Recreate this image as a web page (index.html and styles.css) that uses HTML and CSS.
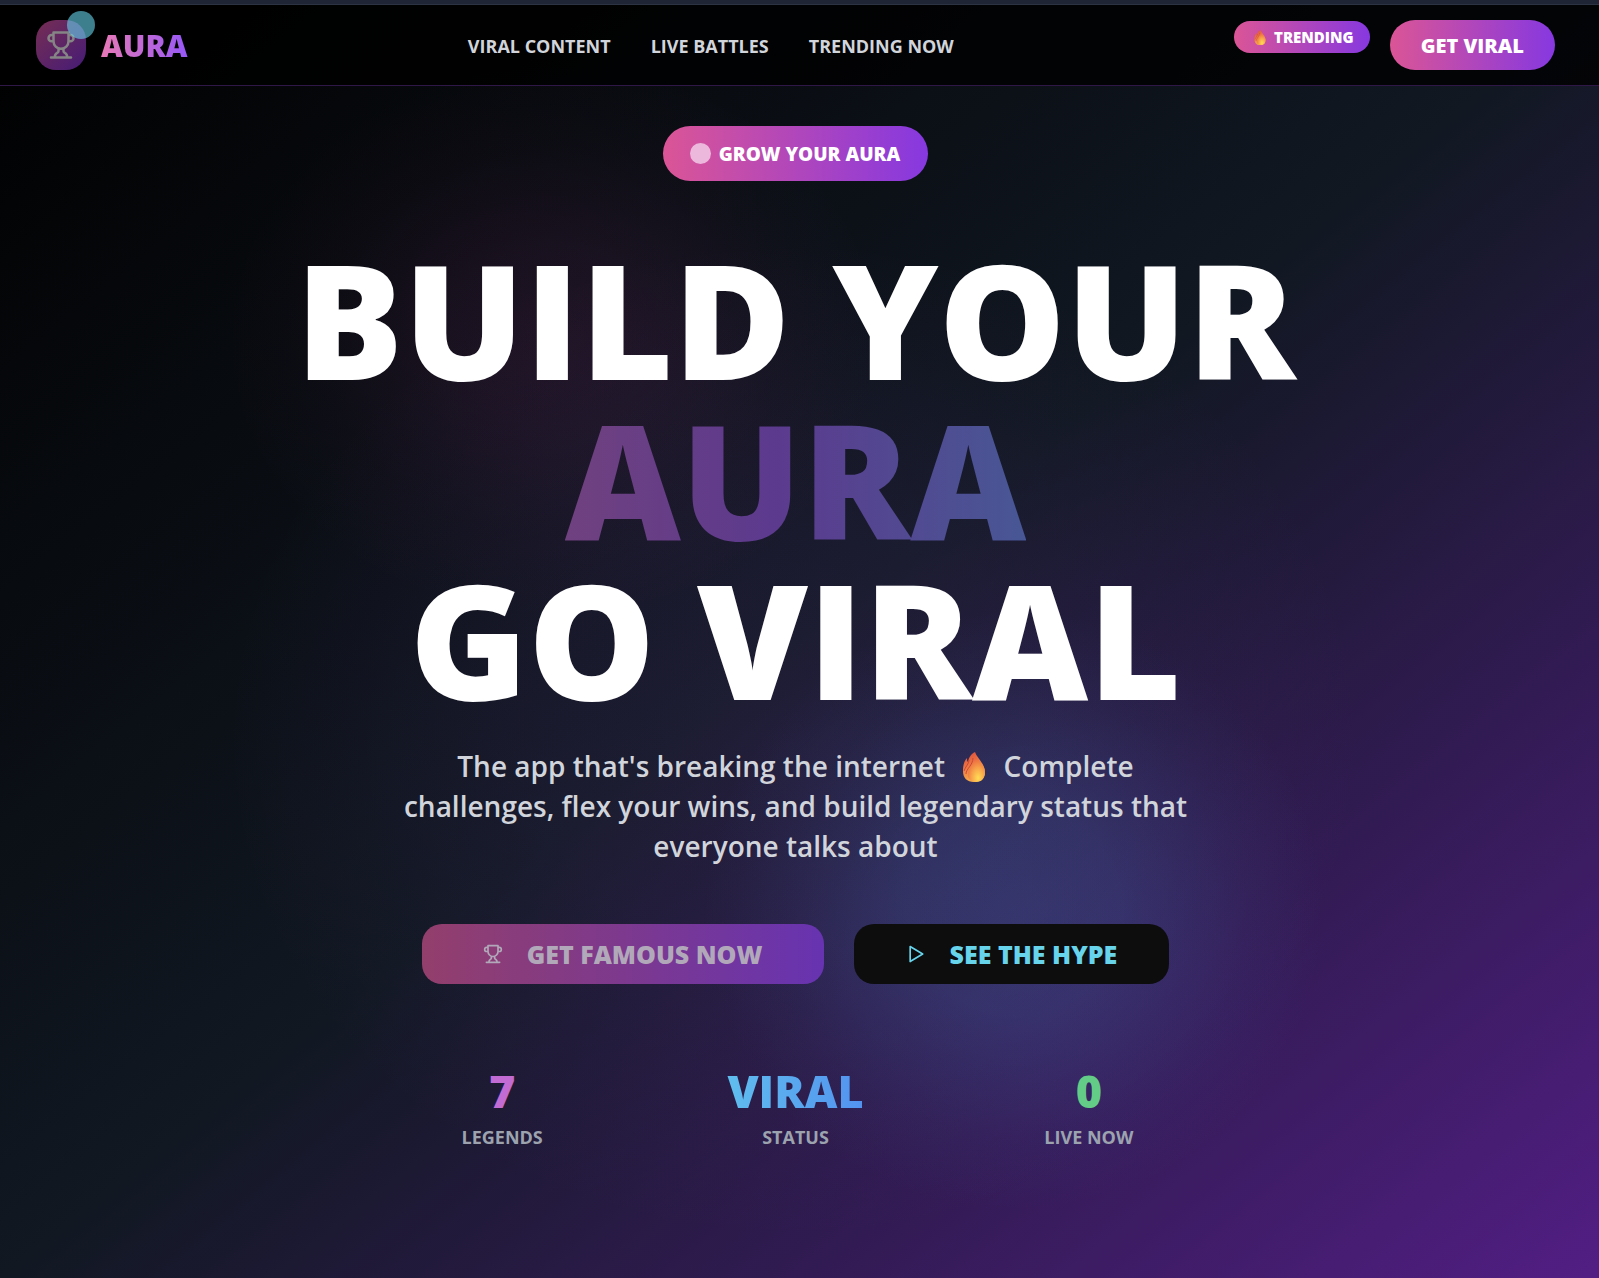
FILE: index.html
```html
<!DOCTYPE html>
<html lang="en">
<head>
<meta charset="utf-8">
<meta name="viewport" content="width=device-width, initial-scale=1">
<title>AURA</title>
<link rel="stylesheet" href="styles.css">
</head>
<body>
<svg class="defs" aria-hidden="true">
  <defs>
    <linearGradient id="flame" x1="0" y1="0" x2="0.4" y2="1"><stop offset="0" stop-color="#d6403a"/><stop offset="0.5" stop-color="#f07a43"/><stop offset="1" stop-color="#f6b04c"/></linearGradient>
    <radialGradient id="core" cx="0.6" cy="0.85" r="0.75"><stop offset="0" stop-color="#ffdc55"/><stop offset="0.45" stop-color="#f9a94b"/><stop offset="1" stop-color="#e9653f"/></radialGradient>
    <symbol id="fire" viewBox="0 0 24 30">
      <path d="M12 30C5 30 1 26 1 19C1 14 2 9 5 6C5 8 5 9 6 10C7 5 9 2 13 0C15 6 23 12 23 20C23 26 19 30 12 30Z" fill="url(#flame)"/>
      <path d="M14 30C8 30 5 26 6 21C7 15 14 10 13 3C15 8 23 13 23 20C23 26 20 30 14 30Z" fill="url(#core)"/>
      <path d="M2 19C3 15 7 12 7 8M4 22C4 17 11 13 11 6" fill="none" stroke="#c9473a" stroke-width="1"/>
    </symbol>
    <symbol id="trophy" viewBox="0 0 24 24">
      <path d="M6 2H18V9A6 6 0 0 1 6 9ZM6 4H4.500A2.500 2.500 0 0 0 4.500 9H6M18 4H19.500A2.500 2.500 0 0 1 19.500 9H18M10 14.700V17C10 17.600 9.500 18 9 18.200C7.900 18.800 7 20.200 7 22M14 14.700V17C14 17.600 14.500 18 15 18.200C16.100 18.800 17 20.200 17 22M4 22H20" fill="none" stroke="currentColor" stroke-width="2" stroke-linecap="round" stroke-linejoin="round"/>
    </symbol>
  </defs>
</svg>
<div class="page">
  <div class="glow glow-purple"></div>
  <div class="glow glow-pink"></div>
  <div class="glow glow-blue"></div>
  <div class="strip"></div>
  <header class="nav">
    <a class="brand" href="#">
      <span class="logo"><svg class="logo-icon"><use href="#trophy"/></svg><span class="logo-dot"></span></span>
      <span class="brand-name">AURA</span>
    </a>
    <nav class="links">
      <a href="#">VIRAL CONTENT</a>
      <a href="#">LIVE BATTLES</a>
      <a href="#">TRENDING NOW</a>
    </nav>
    <div class="actions">
      <span class="trending"><svg class="fire-small"><use href="#fire"/></svg>TRENDING</span>
      <button class="viral" type="button">GET VIRAL</button>
    </div>
  </header>
  <main class="hero">
    <div class="pill"><span class="pill-dot"></span>GROW YOUR AURA</div>
    <h1 class="title"><span>BUILD YOUR</span> <span class="title-aura">AURA</span> <span>GO VIRAL</span></h1>
    <p class="lead">The app that's breaking the internet <svg class="fire-large" role="img" aria-label="fire"><use href="#fire"/></svg> Complete<br>challenges, flex your wins, and build legendary status that<br>everyone talks about</p>
    <div class="cta">
      <button class="famous" type="button"><svg class="cta-icon"><use href="#trophy"/></svg>GET FAMOUS NOW</button>
      <button class="hype" type="button"><svg class="cta-icon" viewBox="0 0 24 24"><path d="M5 3L20 12L5 21Z" fill="none" stroke="currentColor" stroke-width="2" stroke-linejoin="round"/></svg>SEE THE HYPE</button>
    </div>
    <dl class="stats">
      <div><dd class="value legends">7</dd><dt>LEGENDS</dt></div>
      <div><dd class="value status">VIRAL</dd><dt>STATUS</dt></div>
      <div><dd class="value live">0</dd><dt>LIVE NOW</dt></div>
    </dl>
  </main>
</div>
</body>
</html>
```

FILE: styles.css
```css
* { box-sizing: border-box; }

body {
  margin: 0;
  font-family: "Open Sans", "Noto Sans", sans-serif;
  color: #fff;
  background: #000;
}

a { color: inherit; text-decoration: none; }
button { border: 0; font-family: inherit; color: inherit; cursor: pointer; }
svg { flex: none; }
.defs { position: absolute; width: 0; height: 0; }

.page {
  position: relative;
  min-height: 100vh;
  overflow: hidden;
  background: linear-gradient(to bottom right, #000, #111822 50%, #521e84);
}

.glow { position: absolute; border-radius: 50%; }
.glow-purple {
  left: 14%;
  top: 240px;
  width: 1140px;
  height: 1000px;
  background: radial-gradient(closest-side, #a855f716, #a855f710 45%, transparent);
}
.glow-pink {
  left: 14%;
  top: 60px;
  width: 660px;
  height: 560px;
  background: radial-gradient(closest-side, #d946b91a, #d946b914 30%, #d946b906 70%, transparent);
}
.glow-blue {
  left: 44%;
  top: 610px;
  width: 620px;
  height: 600px;
  background: radial-gradient(closest-side, #4b7fc940, #4b7fc936 35%, #4b7fc910 75%, transparent);
}

.strip {
  position: relative;
  height: 5px;
  background: #1f2535;
  border-bottom: 1px solid #2c3444;
}

.nav {
  position: relative;
  display: flex;
  justify-content: space-between;
  align-items: center;
  height: 81px;
  padding: 0 44px 0 36px;
  background: rgba(0, 0, 0, 0.8);
  border-bottom: 1px solid #2f1748;
}

.brand { display: flex; align-items: center; gap: 15px; }
.logo {
  position: relative;
  display: grid;
  place-items: center;
  width: 50px;
  height: 50px;
  border-radius: 20px;
  background: linear-gradient(to bottom right, #762e54, #451b76);
}
.logo-icon { width: 30px; height: 30px; color: #858585; }
.logo-dot {
  position: absolute;
  top: -9px;
  right: -9px;
  width: 28px;
  height: 28px;
  border-radius: 50%;
  background: rgba(103, 212, 236, 0.6);
}
.brand-name {
  padding-top: 2px;
  font-size: 30px;
  line-height: 40px;
  font-weight: 800;
  background: linear-gradient(to right, #e879b6, #9658f8);
  background-clip: text;
  color: transparent;
}

.links { display: flex; gap: 40px; padding-top: 2px; font-size: 18px; font-weight: 700; color: #d1d5db; }

.actions { display: flex; justify-content: flex-end; align-items: flex-start; gap: 20px; }
.trending, .viral, .pill {
  border-radius: 30px;
  background: linear-gradient(to right, #db5596, #8638e0);
  font-weight: 800;
}
.trending {
  display: flex;
  align-items: center;
  gap: 8px;
  height: 32px;
  margin-top: 1px;
  padding: 0 16px 0 20px;
  font-size: 15px;
}
.fire-small { width: 12px; height: 15px; }
.viral { height: 50px; padding: 0 31px; font-size: 20px; }

.hero {
  position: relative;
  display: flex;
  flex-direction: column;
  align-items: center;
  padding: 40px 8px 130px 0;
  text-align: center;
}
.pill {
  display: flex;
  align-items: center;
  gap: 8px;
  height: 55px;
  padding: 0 28px 0 27px;
  font-size: 19px;
}
.pill-dot { width: 21px; height: 21px; border-radius: 50%; background: #ecb8dc; }

.title {
  display: flex;
  flex-direction: column;
  align-items: center;
  margin: 57px 0 0;
  font-size: 160px;
  line-height: 160px;
  font-weight: 800;
}
.title-aura {
  background: linear-gradient(to right, #70417f, #5c3a8e 45%, #485795);
  background-clip: text;
  color: transparent;
}

.lead { margin: 28px 0 0; font-size: 28px; line-height: 40px; font-weight: 600; color: #d1d5db; }
.fire-large { width: 24px; height: 30px; margin: 0 10px; vertical-align: -5px; }

.cta { display: flex; gap: 30px; margin-top: 58px; }
.cta button {
  display: flex;
  align-items: center;
  gap: 24px;
  height: 60px;
  border-radius: 20px;
  font-size: 25px;
  font-weight: 800;
}
.cta .famous { padding: 0 61px; background: linear-gradient(to right, #933f6c, #6733b0); color: #b1a9b9; }
.cta .hype { padding: 0 52px; background: #0d0d0d; color: #67d4ec; }
.cta-icon { width: 20px; height: 20px; }

.stats {
  display: grid;
  grid-template-columns: repeat(3, 1fr);
  width: 880px;
  max-width: 100%;
  margin: 82px 0 0;
}
.stats div { display: flex; flex-direction: column; align-items: center; }
.value { margin: 0; font-size: 45px; line-height: 50px; font-weight: 800; }
.stats dt { margin-top: 9px; font-size: 18px; line-height: 25px; font-weight: 700; color: #9ca3af; }
.legends { color: #c26bd2; }
.status {
  background: linear-gradient(to right, #60bdee, #5292f0);
  background-clip: text;
  color: transparent;
}
.live { color: #63cc86; }
```
